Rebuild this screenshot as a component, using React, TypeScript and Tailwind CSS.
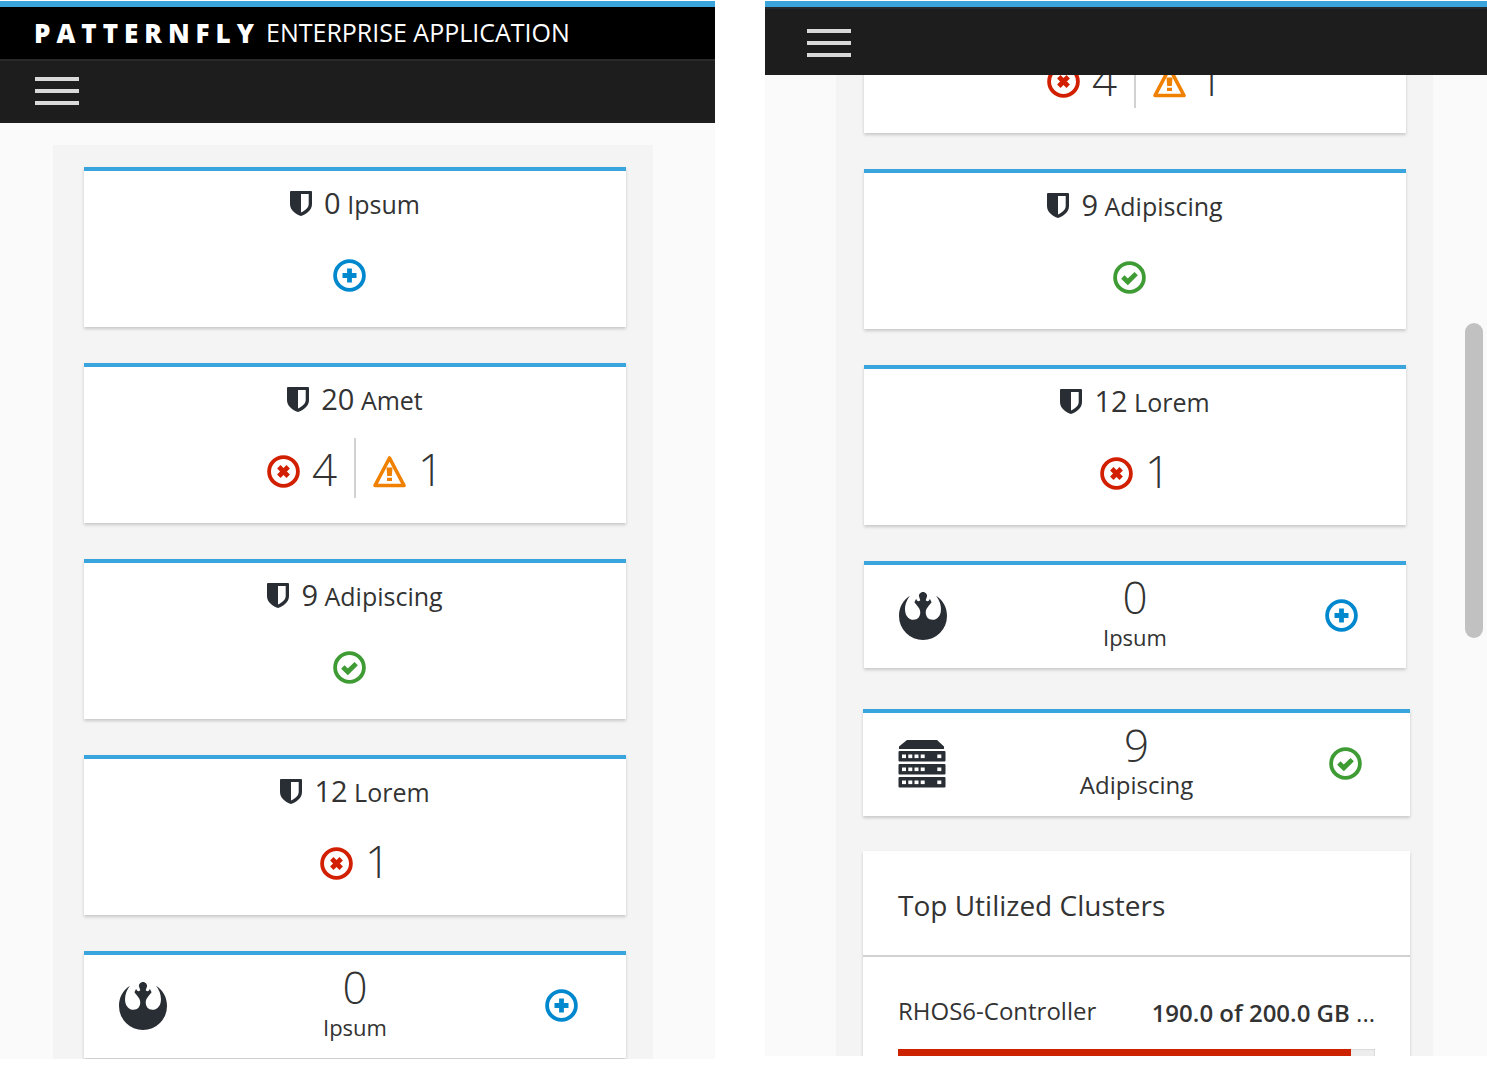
import type { ReactNode } from 'react';

type Status = { kind: 'add' | 'ok' | 'error' | 'warning'; count?: number };

function ShieldIcon() {
  return (
    <svg aria-hidden="true" viewBox="0 0 22 25" className="h-[25px] w-[22px] shrink-0 fill-[#292e34]">
      <path
        fillRule="evenodd"
        d="M1 0H21Q22 0 22 1V13C22 19 16.500 23 11 25C5.500 23 0 19 0 13V1Q0 0 1 0ZM11 3V21.500C15.500 19.200 18.700 16.700 18.700 13V3Z"
      />
    </svg>
  );
}

function StatusIcon({ kind }: { kind: Status['kind'] }) {
  if (kind === 'warning') {
    return (
      <svg role="img" aria-label="Warning" viewBox="0 0 33 33" className="size-[33px] shrink-0">
        <path d="M16.500 3L31 30.500H2Z" fill="none" stroke="#f08000" strokeWidth="3.600" strokeLinejoin="round" />
        <path d="M13.500 12.500H19.500L18.800 21H14.200ZM14 22.800H19V26H14Z" fill="#f08000" />
      </svg>
    );
  }
  const color = { add: '#0088ce', ok: '#3f9c35', error: '#d11f00' }[kind];
  const label = { add: 'Add', ok: 'OK', error: 'Error' }[kind];
  const path = {
    add: 'M16.500 9.500V23.500M9.500 16.500H23.500',
    ok: 'M9.800 16L14.800 20.800L23.200 12.600',
    error: 'M11.800 11.800L21.200 21.200M21.200 11.800L11.800 21.200',
  }[kind];
  return (
    <svg role="img" aria-label={label} viewBox="0 0 33 33" className="size-[33px] shrink-0" fill="none" stroke={color}>
      <circle cx="16.500" cy="16.500" r="14.400" strokeWidth="3.800" />
      <path d={path} strokeWidth="4.800" />
    </svg>
  );
}

function RebelIcon() {
  return (
    <svg aria-hidden="true" viewBox="0 0 140 140" className="size-12 fill-[#292e34]">
      <path d="M32 11C12 24 0 44 0 70A70 70 0 0 0 140 70C140 44 128 24 108 11C118 24 124 40 122 56C120 72 110 81 98 81C85 81 78 72 78 60C78 48 86 42 95 30L90 20C88 28 82 28 78 24L82 12C82 4 74 0 70 0C66 0 58 4 58 12L62 24C58 28 52 28 50 20L45 30C54 42 62 48 62 60C62 72 55 81 42 81C30 81 20 72 18 56C16 40 22 24 32 11Z" />
    </svg>
  );
}

function ServerIcon() {
  return (
    <svg aria-hidden="true" viewBox="0 0 48 48" className="size-12 fill-[#292e34]">
      <path d="M9 0H39L46 6.500V9H1V6.500Z" />
      {[11, 24, 37].map((y) => (
        <g key={y}>
          <rect x="0.500" y={y} width="47" height="10.500" rx="1" />
          {[4, 10.300, 16.500, 22.700, 39.300].map((x) => (
            <rect key={x} x={x} y={y + 3.500} width="4" height="3.600" fill="#fff" />
          ))}
        </g>
      ))}
    </svg>
  );
}

const cardShadow = 'bg-white shadow-[0_2px_3px_rgba(3,3,3,0.18)]';

function AggregateCard({ count, label, statuses }: { count: number; label: string; statuses: Status[] }) {
  return (
    <section className={`${cardShadow} border-t-4 border-[#39a5dc] pt-3 pb-[25px]`}>
      <h2 className="flex h-10 items-center justify-center gap-3 text-[#333]">
        <ShieldIcon />
        <span className="text-[25px] leading-10">
          <span className="text-[29px]">{count}</span> {label}
        </span>
      </h2>
      <div className="mt-[19px] flex h-[60px] justify-center">
        {statuses.map((s, i) => (
          <div
            key={s.kind}
            className={
              i > 0
                ? 'ml-[17px] flex items-center border-l-2 border-[#d1d1d1] pt-1.5 pl-[17px]'
                : 'flex items-center pt-1.5'
            }
          >
            <StatusIcon kind={s.kind} />
            <span className="ml-3 pb-1 text-[44px] leading-[50px] font-light text-[#333]">{s.count}</span>
          </div>
        ))}
      </div>
    </section>
  );
}

type MiniCardProps = { icon: ReactNode; count: number; label: string; kind: Status['kind']; large?: boolean };

function MiniCard({ icon, count, label, kind, large }: MiniCardProps) {
  return (
    <section
      className={`${cardShadow} grid grid-cols-[1fr_auto_1fr] items-center border-t-4 border-[#39a5dc] px-[35px] pt-2 pb-2.5`}
    >
      <div className="flex">{icon}</div>
      <h2 className="flex flex-col items-center pb-[5px] text-[#333]">
        <span className="text-[44px] leading-[48px] font-light">{count}</span>
        <span className={large ? 'text-[24px] leading-8' : 'text-[22px] leading-8'}>{label}</span>
      </h2>
      <div className="flex justify-end pr-[13px]">
        <StatusIcon kind={kind} />
      </div>
    </section>
  );
}

function MenuButton() {
  return (
    <button type="button" aria-label="Toggle navigation" className="flex w-11 flex-col gap-2">
      <span className="h-1 w-full bg-[#d9d9d9]" />
      <span className="h-1 w-full bg-[#d9d9d9]" />
      <span className="h-1 w-full bg-[#d9d9d9]" />
    </button>
  );
}

const amet: Status[] = [
  { kind: 'error', count: 4 },
  { kind: 'warning', count: 1 },
];

function ClustersCard() {
  const used = 190;
  const total = 200;
  return (
    <section className={`${cardShadow} text-[#333]`}>
      <h2 className="border-b-2 border-[#d1d1d1] px-[35px] pt-[34px] pb-[30px] text-[28px] leading-10">
        Top Utilized Clusters
      </h2>
      <div className="px-[35px] pt-[35px] pb-10">
        <div className="flex items-center justify-between text-[24px] leading-[34px]">
          <span id="rhos6">RHOS6-Controller</span>
          <span className="pt-1">
            <strong className="font-semibold">190.0 of 200.0 GB</strong> ...
          </span>
        </div>
        <div
          role="progressbar"
          aria-labelledby="rhos6"
          aria-valuenow={used}
          aria-valuemax={total}
          className="mt-[19px] h-6 bg-[#ededed] shadow-[inset_0_0_2px_rgba(3,3,3,0.25)]"
        >
          <div className="h-full bg-[#cc2200]" style={{ width: `${(used / total) * 100}%` }} />
        </div>
      </div>
    </section>
  );
}

export default function App() {
  return (
    <main className="grid h-screen grid-cols-[715fr_722fr] grid-rows-1 gap-[50px] overflow-hidden bg-white pt-px font-['Open_Sans','Noto_Sans',sans-serif]">
      <div className="flex min-h-0 flex-col pb-8">
        <header className="border-t-6 border-[#39a5dc]">
          <div className="flex h-[52px] items-center bg-black px-[34px] text-[25px] whitespace-nowrap text-white">
            <span className="text-[26px] font-extrabold tracking-[6px]">PATTERNFLY</span>
            <span className="ml-1.5 font-normal">ENTERPRISE APPLICATION</span>
          </div>
          <nav className="flex h-16 items-center border-t-2 border-[#292929] bg-[#1d1d1d] px-[35px] pb-0.5">
            <MenuButton />
          </nav>
        </header>
        <div className="min-h-0 flex-1 overflow-hidden bg-[#fafafa] pt-[22px] pr-[62px] pl-[53px]">
          <div className="flex flex-col gap-9 bg-[#f4f4f4] pt-[22px] pr-[27px] pb-9 pl-[31px]">
            <AggregateCard count={0} label="Ipsum" statuses={[{ kind: 'add' }]} />
            <AggregateCard count={20} label="Amet" statuses={amet} />
            <AggregateCard count={9} label="Adipiscing" statuses={[{ kind: 'ok' }]} />
            <AggregateCard count={12} label="Lorem" statuses={[{ kind: 'error', count: 1 }]} />
            <MiniCard icon={<RebelIcon />} count={0} label="Ipsum" kind="add" />
          </div>
        </div>
      </div>

      <div className="flex min-h-0 flex-col pb-[35px]">
        <header className="border-t-6 border-[#39a5dc]">
          <nav className="flex h-[68px] items-center border-t-2 border-[#252a2e] bg-[#1d1d1d] px-[42px] pt-0.5">
            <MenuButton />
          </nav>
        </header>
        <div className="relative min-h-0 flex-1 overflow-hidden bg-[#fafafa] pr-[54px] pl-[71px]">
          <div className="-mt-[102px] flex flex-col gap-9 bg-[#f4f4f4] pr-[27px] pl-7">
            <AggregateCard count={20} label="Amet" statuses={amet} />
            <AggregateCard count={9} label="Adipiscing" statuses={[{ kind: 'ok' }]} />
            <AggregateCard count={12} label="Lorem" statuses={[{ kind: 'error', count: 1 }]} />
            <MiniCard icon={<RebelIcon />} count={0} label="Ipsum" kind="add" />
            <div className="mt-[5px] -mr-1 -ml-px flex flex-col gap-[35px]">
              <MiniCard icon={<ServerIcon />} count={9} label="Adipiscing" kind="ok" large />
              <ClustersCard />
            </div>
          </div>
          <div className="absolute top-[248px] right-1 h-[315px] w-[18px] rounded-full bg-[#c1c1c1]" />
        </div>
      </div>
    </main>
  );
}
